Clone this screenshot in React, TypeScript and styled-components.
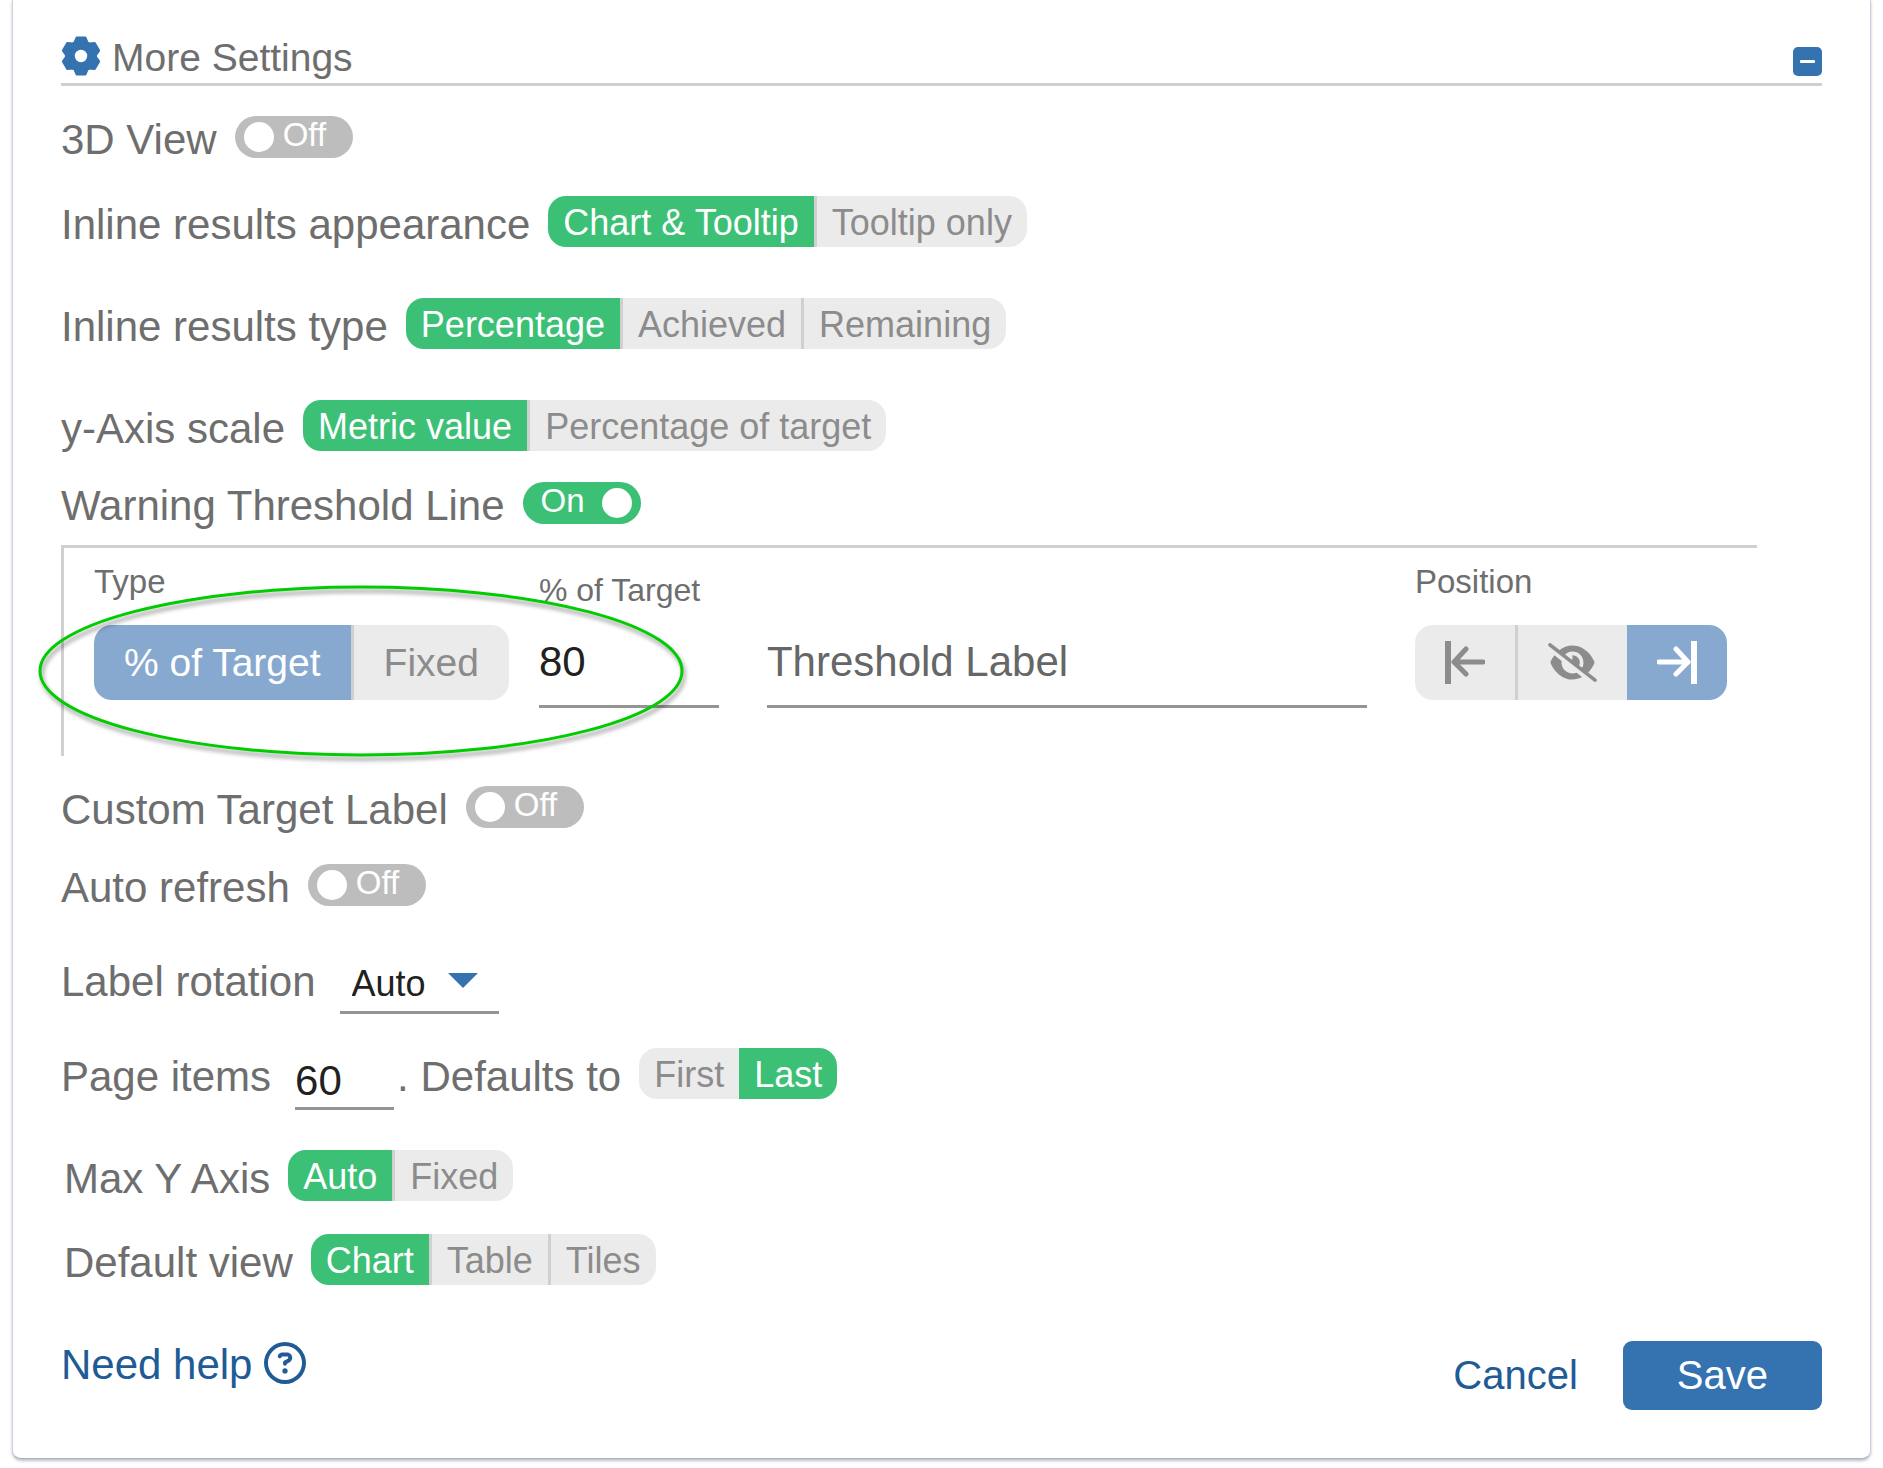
import React, { useId, useState } from "react";
import styled, { createGlobalStyle } from "styled-components";
import { FaEyeSlash, FaRegCircleQuestion } from "react-icons/fa6";

const color = {
  text: "#6e6e6e",
  muted: "#8c8c8c",
  ink: "#212121",
  blue: "#3572b0",
  link: "#205b95",
  softBlue: "#87a9d0",
  green: "#3bc076",
  track: "#bdbdbd",
  segment: "#ebebeb",
  divider: "#d0d0d0",
  underline: "#949494",
};

const GlobalStyle = createGlobalStyle`
  *, *::before, *::after { box-sizing: border-box; }
  body {
    margin: 0;
    background: #fff;
    color: ${color.text};
    font-family: "Liberation Sans", Arial, Helvetica, sans-serif;
  }
  button, input, select { font-family: inherit; margin: 0; }
`;

const Card = styled.main`
  margin: 0 12px 10px;
  padding: 31px 48px 48px;
  background: #fff;
  border: 1px solid #ccd2dd;
  border-top: 0;
  border-bottom-color: #a9b2c0;
  border-radius: 0 0 9px 9px;
  box-shadow: 0 2px 3px rgba(60, 75, 100, 0.35);
`;

const Header = styled.header`
  display: flex;
  align-items: center;
  gap: 11px;
  height: 55px;
  border-bottom: 3px solid ${color.divider};
`;

const GearSvg = styled.svg`
  flex: none;
  width: 40px;
  height: 40px;
  margin-bottom: 2px;
  color: ${color.blue};
`;

const Title = styled.h1`
  flex: 1;
  margin: 0;
  padding-top: 2px;
  font-size: 39px;
  font-weight: 400;
  line-height: 48px;
`;

const CollapseButton = styled.button`
  display: flex;
  align-items: center;
  justify-content: center;
  align-self: flex-end;
  width: 29px;
  height: 29px;
  margin-bottom: 7px;
  padding: 0;
  border: 0;
  border-radius: 5px;
  background: ${color.blue};
  cursor: pointer;
`;

const Row = styled.div<{ $top: number; $indent?: boolean; $baseline?: boolean }>`
  display: flex;
  align-items: ${(p) => (p.$baseline ? "baseline" : "center")};
  margin-top: ${(p) => p.$top}px;
  padding-left: ${(p) => (p.$indent ? 3 : 0)}px;
`;

const labelText = `
  padding-top: 5px;
  font-size: 42px;
  line-height: 37px;
  white-space: nowrap;
`;

const RowLabel = styled.label<{ $wide?: boolean }>`
  ${labelText}
  margin-right: ${(p) => (p.$wide ? 24 : 18)}px;
`;

const RowText = styled.span`
  ${labelText}
  margin-right: 18px;
`;

const SwitchTrack = styled.span<{ $on: boolean }>`
  position: relative;
  display: flex;
  flex-direction: ${(p) => (p.$on ? "row-reverse" : "row")};
  align-items: center;
  justify-content: flex-start;
  gap: 9px;
  width: 118px;
  height: 42px;
  padding: 0 9px;
  border-radius: 21px;
  background: ${(p) => (p.$on ? color.green : color.track)};
  color: #fff;
`;

const SwitchInput = styled.input`
  position: absolute;
  inset: 0;
  width: 100%;
  height: 100%;
  opacity: 0;
  cursor: pointer;
`;

const SwitchKnob = styled.span`
  flex: none;
  width: 30px;
  height: 30px;
  border-radius: 50%;
  background: #fff;
`;

const SwitchText = styled.span<{ $on: boolean }>`
  flex: 1;
  padding: 0 0 5px ${(p) => (p.$on ? 9 : 0)}px;
  font-size: 33px;
  line-height: 37px;
`;

type Tone = "green" | "blue";

const SegmentGroup = styled.div`
  display: flex;
  border-radius: 18px;
  overflow: hidden;
`;

const Segment = styled.button<{ $tone: Tone; $active: boolean; $divided: boolean }>`
  display: flex;
  align-items: center;
  justify-content: center;
  height: ${(p) => (p.$tone === "green" ? 51 : 75)}px;
  padding: ${(p) => (p.$tone === "green" ? "2px 15px 0" : "0 30px")};
  border: 0;
  border-left: ${(p) => (p.$divided ? `3px solid ${color.divider}` : "0")};
  background: ${(p) =>
    !p.$active ? color.segment : p.$tone === "green" ? color.green : color.softBlue};
  color: ${(p) => (p.$active ? "#fff" : color.muted)};
  font-size: ${(p) => (p.$tone === "green" ? 36 : 39)}px;
  line-height: 1;
  white-space: nowrap;
  cursor: pointer;
`;

const ThresholdPanel = styled.section`
  position: relative;
  display: flex;
  align-items: flex-end;
  margin: 21px 65px 0 0;
  padding: 15px 30px 48px;
  border-top: 3px solid ${color.divider};
  border-left: 3px solid ${color.divider};
`;

const PanelGroup = styled.div`
  display: flex;
  flex-direction: column;
  align-items: flex-start;
  gap: 24px;
  padding-bottom: 8px;
`;

const PanelCaption = styled.span`
  font-size: 33px;
  line-height: 38px;
`;

const PanelField = styled.div<{ $grow?: boolean }>`
  display: flex;
  flex-direction: column;
  gap: 10px;
  flex: ${(p) => (p.$grow ? "1 1 0" : "0 0 180px")};
  min-width: 0;
  margin: ${(p) => (p.$grow ? "0 48px" : "0 0 0 30px")};
`;

const FieldCaption = styled.label`
  font-size: 32px;
  line-height: 38px;
  white-space: nowrap;
`;

const TextInput = styled.input<{ $compact?: boolean }>`
  width: ${(p) => (p.$compact ? "99px" : "100%")};
  height: ${(p) => (p.$compact ? 57 : 89)}px;
  margin: ${(p) => (p.$compact ? "16px 3px 0 0" : "0")};
  padding: ${(p) => (p.$compact ? 2 : 0)}px 0 0;
  border: 0;
  border-bottom: 3px solid ${color.underline};
  border-radius: 0;
  outline: 0;
  background: transparent;
  color: ${color.ink};
  font-size: 42px;

  &::placeholder {
    color: #666;
    opacity: 1;
  }
`;

const EyeSlashIcon = styled(FaEyeSlash)`
  width: 49px;
  height: 39px;
`;

const Annotation = styled.svg`
  position: absolute;
  left: -29px;
  top: 35px;
  overflow: visible;
  pointer-events: none;
  filter: drop-shadow(2px 4px 2px rgba(0, 0, 0, 0.4));
`;

const SelectWrap = styled.span`
  position: relative;
  display: inline-block;
`;

const Select = styled.select`
  appearance: none;
  width: 159px;
  height: 58px;
  padding: 0 48px 0 12px;
  border: 0;
  border-bottom: 3px solid ${color.underline};
  border-radius: 0;
  background: transparent;
  color: ${color.ink};
  font-size: 36px;
  cursor: pointer;
`;

const SelectArrow = styled.span`
  position: absolute;
  right: 21px;
  top: 17px;
  border: 15px solid transparent;
  border-top-color: ${color.blue};
  border-bottom: 0;
  pointer-events: none;
`;

const Footer = styled.footer`
  display: flex;
  align-items: flex-start;
  justify-content: space-between;
  margin-top: 56px;
`;

const HelpLink = styled.a`
  display: flex;
  align-items: center;
  gap: 12px;
  color: ${color.link};
  font-size: 42px;
  line-height: 48px;
  text-decoration: none;
`;

const HelpIcon = styled(FaRegCircleQuestion)`
  width: 42px;
  height: 42px;
  margin-bottom: 4px;
`;

const Actions = styled.div`
  display: flex;
  gap: 45px;
`;

const ActionButton = styled.button<{ $primary?: boolean }>`
  height: 69px;
  padding: 0 ${(p) => (p.$primary ? 54 : 0)}px;
  border: 0;
  border-radius: 9px;
  background: ${(p) => (p.$primary ? color.blue : "transparent")};
  color: ${(p) => (p.$primary ? "#fff" : color.link)};
  font-size: 40px;
  cursor: pointer;
`;

function Switch({ id, initial = false }: { id: string; initial?: boolean }) {
  const [on, setOn] = useState(initial);
  return (
    <SwitchTrack $on={on}>
      <SwitchKnob />
      <SwitchText $on={on}>{on ? "On" : "Off"}</SwitchText>
      <SwitchInput
        id={id}
        type="checkbox"
        role="switch"
        checked={on}
        onChange={(e) => setOn(e.target.checked)}
      />
    </SwitchTrack>
  );
}

function SwitchRow({ label, top, initial }: { label: string; top: number; initial?: boolean }) {
  const id = useId();
  return (
    <Row $top={top}>
      <RowLabel htmlFor={id}>{label}</RowLabel>
      <Switch id={id} initial={initial} />
    </Row>
  );
}

type Option = { name: string; icon?: React.ReactNode };

function Segments(props: { label: string; options: Option[]; initial: number; tone?: Tone }) {
  const { label, options, initial, tone = "green" } = props;
  const [selected, setSelected] = useState(initial);
  return (
    <SegmentGroup role="group" aria-label={label}>
      {options.map((option, i) => (
        <Segment
          key={option.name}
          type="button"
          $tone={tone}
          $active={i === selected}
          $divided={i > 0 && i !== selected}
          aria-pressed={i === selected}
          aria-label={option.icon ? option.name : undefined}
          onClick={() => setSelected(i)}
        >
          {option.icon ?? option.name}
        </Segment>
      ))}
    </SegmentGroup>
  );
}

const named = (...names: string[]): Option[] => names.map((name) => ({ name }));

function SegmentRow(props: {
  label: string;
  top: number;
  names: string[];
  indent?: boolean;
}) {
  return (
    <Row $top={props.top} $indent={props.indent}>
      <RowText>{props.label}</RowText>
      <Segments label={props.label} options={named(...props.names)} initial={0} />
    </Row>
  );
}

// Six flat teeth, each a pair of tip corners between a pair of root corners.
const gearOutline = [0, 60, 120, 180, 240, 300]
  .flatMap((tooth) => [
    [tooth - 25, 14.6],
    [tooth - 13, 18.4],
    [tooth + 13, 18.4],
    [tooth + 25, 14.6],
  ])
  .map(([degrees, radius]) => {
    const angle = (degrees * Math.PI) / 180;
    return `${(20 + radius * Math.sin(angle)).toFixed(2)},${(20 - radius * Math.cos(angle)).toFixed(2)}`;
  })
  .join(" ");

function GearIcon() {
  return (
    <GearSvg viewBox="0 0 40 40" aria-hidden="true">
      <polygon
        points={gearOutline}
        fill="currentColor"
        stroke="currentColor"
        strokeWidth="3"
        strokeLinejoin="round"
      />
      <circle cx="20" cy="20" r="6.2" fill="#fff" />
    </GearSvg>
  );
}

function EdgeArrow({ side }: { side: "left" | "right" }) {
  const left = side === "left";
  return (
    <svg width="40" height="43" viewBox="0 0 40 43" fill="none" aria-hidden="true">
      <rect x={left ? 0 : 34} y="0" width="6" height="43" fill="currentColor" />
      <path
        d={left ? "M9 21H38M21 8L9 21L21 33" : "M31 21H2M19 8L31 21L19 33"}
        stroke="currentColor"
        strokeWidth="5"
        strokeLinecap="round"
        strokeLinejoin="round"
      />
    </svg>
  );
}

const positions: Option[] = [
  { name: "Left", icon: <EdgeArrow side="left" /> },
  { name: "Hidden", icon: <EyeSlashIcon /> },
  { name: "Right", icon: <EdgeArrow side="right" /> },
];

function ThresholdSettings() {
  return (
    <ThresholdPanel aria-label="Warning threshold">
      <PanelGroup>
        <PanelCaption>Type</PanelCaption>
        <Segments label="Type" tone="blue" options={named("% of Target", "Fixed")} initial={0} />
      </PanelGroup>
      <PanelField>
        <FieldCaption htmlFor="threshold-value">% of Target</FieldCaption>
        <TextInput id="threshold-value" inputMode="numeric" defaultValue="80" />
      </PanelField>
      <PanelField $grow>
        <TextInput aria-label="Threshold Label" placeholder="Threshold Label" />
      </PanelField>
      <PanelGroup>
        <PanelCaption>Position</PanelCaption>
        <Segments label="Position" tone="blue" options={positions} initial={2} />
      </PanelGroup>
      <Annotation width="652" height="176" viewBox="0 0 652 176" fill="none" aria-hidden="true">
        <ellipse cx="326" cy="88" rx="321" ry="84" stroke="#00cc00" strokeWidth="3" />
      </Annotation>
    </ThresholdPanel>
  );
}

export default function App() {
  return (
    <>
      <GlobalStyle />
      <Card>
        <Header>
          <GearIcon />
          <Title>More Settings</Title>
          <CollapseButton type="button" aria-label="Collapse">
            <svg width="15" height="3" viewBox="0 0 15 3" aria-hidden="true">
              <rect width="15" height="3" rx="1" fill="#fff" />
            </svg>
          </CollapseButton>
        </Header>

        <SwitchRow label="3D View" top={30} />
        <SegmentRow
          label="Inline results appearance"
          top={38}
          names={["Chart & Tooltip", "Tooltip only"]}
        />
        <SegmentRow
          label="Inline results type"
          top={51}
          names={["Percentage", "Achieved", "Remaining"]}
        />
        <SegmentRow
          label="y-Axis scale"
          top={51}
          names={["Metric value", "Percentage of target"]}
        />
        <SwitchRow label="Warning Threshold Line" top={31} initial />
        <ThresholdSettings />
        <SwitchRow label="Custom Target Label" top={30} />
        <SwitchRow label="Auto refresh" top={36} />

        <Row $top={50} $baseline>
          <RowLabel htmlFor="label-rotation" $wide>
            Label rotation
          </RowLabel>
          <SelectWrap>
            <Select id="label-rotation" defaultValue="Auto">
              <option>Auto</option>
              <option>0°</option>
              <option>45°</option>
              <option>90°</option>
            </Select>
            <SelectArrow />
          </SelectWrap>
        </Row>

        <Row $top={23}>
          <RowLabel htmlFor="page-items" $wide>
            Page items
          </RowLabel>
          <TextInput id="page-items" $compact inputMode="numeric" defaultValue="60" />
          <RowText>. Defaults to</RowText>
          <Segments label="Defaults to" options={named("First", "Last")} initial={1} />
        </Row>

        <SegmentRow label="Max Y Axis" top={40} names={["Auto", "Fixed"]} indent />
        <SegmentRow label="Default view" top={33} names={["Chart", "Table", "Tiles"]} indent />

        <Footer>
          <HelpLink href="#help">
            Need help
            <HelpIcon />
          </HelpLink>
          <Actions>
            <ActionButton type="button">Cancel</ActionButton>
            <ActionButton type="submit" $primary>
              Save
            </ActionButton>
          </Actions>
        </Footer>
      </Card>
    </>
  );
}
